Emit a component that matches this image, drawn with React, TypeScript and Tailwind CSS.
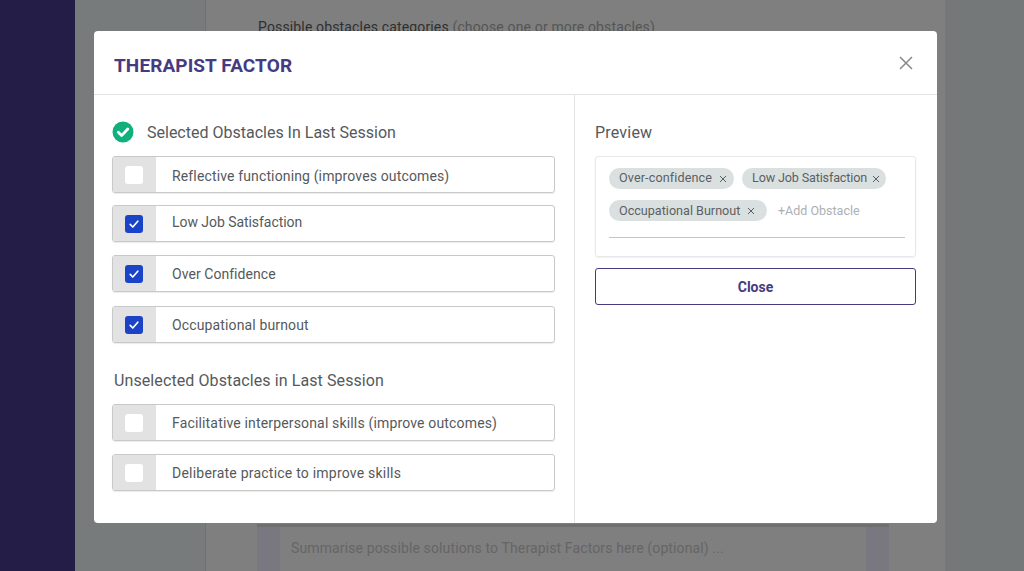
const font = "font-['Roboto',sans-serif]";

function Check({ on }: { on: boolean }) {
  return on ? (
    <span className="flex h-[18px] w-[18px] items-center justify-center rounded-[3px] bg-[#1a43c8]">
      <svg width="12" height="12" viewBox="0 0 12 12" fill="none" stroke="#fff" strokeWidth="1.7" strokeLinecap="round" strokeLinejoin="round">
        <path d="M2.2 6.4 4.8 9 9.8 3.2" />
      </svg>
    </span>
  ) : (
    <span className="h-[18px] w-[18px] rounded-[3px] bg-white" />
  );
}

function Row({ label, on, className, textClass }: { label: string; on: boolean; className: string; textClass: string }) {
  return (
    <div className={`flex h-[37px] overflow-hidden rounded-[3px] border border-[#c9c9c9] shadow-[0_1px_1px_rgba(0,0,0,0.08)] ${className}`}>
      <div className="flex w-[43px] shrink-0 items-center justify-center bg-[#e2e2e2] pr-px">
        <Check on={on} />
      </div>
      <div className={`flex flex-1 items-center pl-[16px] text-[14px] text-[#55595c] ${textClass}`}>{label}</div>
    </div>
  );
}

function Chip({ label, className }: { label: string; className: string }) {
  return (
    <span className={`flex h-[21px] items-center whitespace-nowrap rounded-full bg-[#dae0e0] pl-[10px] text-[12.6px] text-[#5a6062] ${className}`}>
      {label}
      <svg className="ml-auto" width="8" height="8" viewBox="0 0 8 8" stroke="#5a6062" strokeWidth="1">
        <path d="M1 1l6 6M7 1 1 7" />
      </svg>
    </span>
  );
}

export default function App() {
  return (
    <div className={`relative flex h-[571px] w-[1024px] overflow-hidden bg-[#747878] ${font}`}>
      <div className="w-[75px] shrink-0 bg-[#241d47]" />
      <div className="w-[130px] shrink-0 bg-[#777b7b]" />
      <div className="flex w-[740px] shrink-0 flex-col border-l border-[#707272] bg-[#7f7f7f] pl-[51px]">
        <p className="ml-px mt-[17px] text-[14px] tracking-[0.15px] text-[#2f2f2f]">
          Possible obstacles categories <span className="text-[#555]">(choose one or more obstacles)</span>
        </p>
        <div className="mt-auto flex h-[47px] w-[632px] border-t-[3px] border-[#6f6f6f] bg-[#79777f]">
          <div className="ml-[23px] w-[586px] bg-[#7f7f7f] pl-[11px] pt-[11px] text-[14px] tracking-[0.12px] text-[#656565]">
            Summarise possible solutions to Therapist Factors here (optional) ...
          </div>
        </div>
      </div>

      <div className="absolute left-[94px] top-[31px] flex h-[492px] w-[843px] flex-col rounded-[4px] bg-white">
        <div className="flex h-[64px] shrink-0 items-center justify-between border-b border-[#e3e3e3] pl-[20px] pr-[23px]">
          <h2 className="mt-[8px] text-[19px] font-bold tracking-[0.1px] text-[#463a80]">THERAPIST FACTOR</h2>
          <svg width="16" height="16" viewBox="0 0 16 16" stroke="#85888a" strokeWidth="1.5">
            <path d="M2 2l12 12M14 2 2 14" />
          </svg>
        </div>
        <div className="flex flex-1">
          <div className="w-[481px] shrink-0 border-r border-[#e3e3e3] pl-[18px] pr-[19px] pt-[26px]">
            <div className="flex h-[22px] items-center">
              <svg width="22" height="22" viewBox="0 0 22 22">
                <circle cx="11" cy="11" r="10.5" fill="#0fb07c" />
                <path d="M6.3 11.3 9.6 14.6 15.8 8" fill="none" stroke="#fff" strokeWidth="2.8" strokeLinecap="round" strokeLinejoin="round" />
              </svg>
              <span className="ml-[13px] pt-[2px] text-[16px] text-[#55595c]">Selected Obstacles In Last Session</span>
            </div>
            <Row className="mt-[13px]" textClass="pt-[4px] tracking-[0.14px]" on={false} label="Reflective functioning (improves outcomes)" />
            <Row className="mt-[12px]" textClass="pb-[2px] tracking-[-0.05px]" on label="Low Job Satisfaction" />
            <Row className="mt-[13px]" textClass="pt-[2px] tracking-[0.05px]" on label="Over Confidence" />
            <Row className="mt-[14px]" textClass="pt-[2px] tracking-[0.14px]" on label="Occupational burnout" />
            <h3 className="ml-[2px] mt-[25px] pt-px text-[16px] tracking-[0.1px] text-[#55595c]">Unselected Obstacles in Last Session</h3>
            <Row className="mt-[11px]" textClass="pt-[2px] tracking-[0.16px]" on={false} label="Facilitative interpersonal skills (improve outcomes)" />
            <Row className="mt-[13px]" textClass="pt-[2px] tracking-[0.22px]" on={false} label="Deliberate practice to improve skills" />
          </div>
          <div className="flex-1 pl-[20px] pr-[21px] pt-[26px]">
            <div className="flex h-[22px] items-center pt-[2px] text-[16px] tracking-[0.2px] text-[#55595c]">Preview</div>
            <div className="mt-[13px] h-[101px] rounded-[3px] border border-[#e8e8e8] pl-[13px] pr-[10px] pt-[11px] shadow-[0_1px_2px_rgba(0,0,0,0.06)]">
              <div className="flex gap-[8px]">
                <Chip className="w-[125px] pr-[7px] tracking-[0.12px]" label="Over-confidence" />
                <Chip className="w-[144px] pr-[6px] tracking-[-0.15px]" label="Low Job Satisfaction" />
              </div>
              <div className="mt-[11px] flex items-center">
                <Chip className="w-[158px] pr-[12px] pt-px" label="Occupational Burnout" />
                <span className="ml-[11px] pt-px text-[12.5px] text-[#adb0b2]">+Add Obstacle</span>
              </div>
              <div className="mt-[16px] h-px w-[296px] bg-[#c4c6c6]" />
            </div>
            <button className="mt-[11px] h-[37px] w-full rounded-[3px] border border-[#463a80] pt-px text-[14px] font-bold text-[#463a80]">Close</button>
          </div>
        </div>
      </div>
    </div>
  );
}
